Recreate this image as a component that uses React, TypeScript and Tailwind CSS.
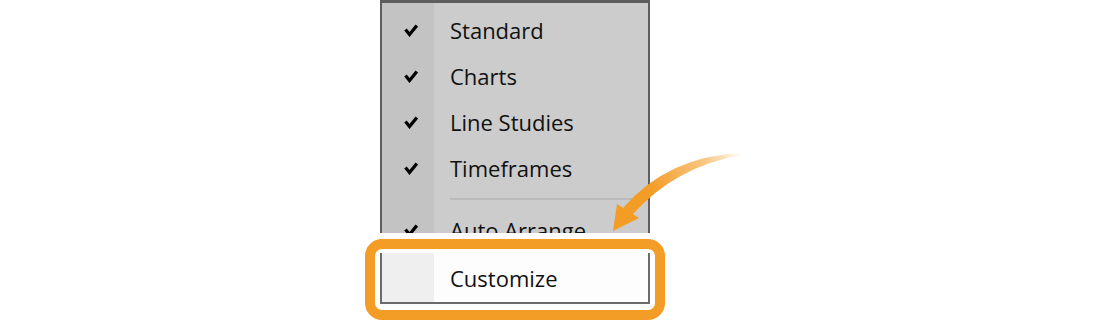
const items = ["Standard", "Charts", "Line Studies", "Timeframes"];

function Check() {
  return (
    <svg width="14" height="13" viewBox="0 0 14 13" className="block">
      <path d="M1.5 5.5 L5.5 10.5 L12.8 1.6" fill="none" stroke="#000" strokeWidth="3.2" strokeLinejoin="miter" />
    </svg>
  );
}

function Row({ label, checked }: { label: string; checked: boolean }) {
  return (
    <div className="flex h-[46px] items-center">
      <div className="flex h-full w-[52px] shrink-0 items-center bg-[#c3c3c3] pl-[22px]">{checked && <Check />}</div>
      <span className="pl-[16px] text-[22px] leading-none text-[#111]">{label}</span>
    </div>
  );
}

export default function App() {
  return (
    <div className="relative h-[326px] w-[1100px] overflow-hidden bg-white font-['Open_Sans','Noto_Sans',sans-serif]">
      <div className="ml-[365px] flex w-[300px] flex-col">
        {/* menu, clipped at the bottom */}
        <div className="mx-[15px] h-[233px] overflow-hidden border-x-2 border-t-[3px] border-[#5e5e5e] bg-[#cccccc]">
          <div className="flex h-[4px]">
            <div className="w-[52px] bg-[#c3c3c3]" />
          </div>
          {items.map((t) => (
            <Row key={t} label={t} checked />
          ))}
          <div className="flex h-[16px]">
            <div className="w-[52px] bg-[#c3c3c3]" />
            <div className="ml-[16px] mr-[4px] mt-[7px] h-[2px] flex-1 bg-[#bababa]" />
          </div>
          <Row label="Auto Arrange" checked />
        </div>

        {/* highlighted item */}
        <div className="mt-[6px] h-[81px] rounded-[17px] border-[10px] border-[#f39c26] bg-white px-[5px] pt-[4px]">
          <div className="flex h-[51px] border-x-2 border-b-2 border-[#6b6b6b] bg-[#fdfdfd]">
            <div className="w-[52px] shrink-0 bg-[#efefef]" />
            <span className="flex items-center pl-[16px] text-[22px] leading-none text-[#111]">Customize</span>
          </div>
        </div>
      </div>

      {/* arrow */}
      <svg className="pointer-events-none absolute left-0 top-0" width="1100" height="326" viewBox="0 0 1100 326">
        <defs>
          <linearGradient id="ag" gradientUnits="userSpaceOnUse" x1="742" y1="154" x2="650" y2="190">
            <stop offset="0" stopColor="#f39c26" stopOpacity="0" />
            <stop offset="0.35" stopColor="#f39c26" stopOpacity="0.55" />
            <stop offset="1" stopColor="#f39c26" stopOpacity="1" />
          </linearGradient>
        </defs>
        <path d="M742 153 Q668 156 623 208 L632 215 Q676 166 742 155 Z" fill="url(#ag)" />
        <path d="M617 204 L639 218 L613 231 Z" fill="#f39c26" />
      </svg>
    </div>
  );
}
